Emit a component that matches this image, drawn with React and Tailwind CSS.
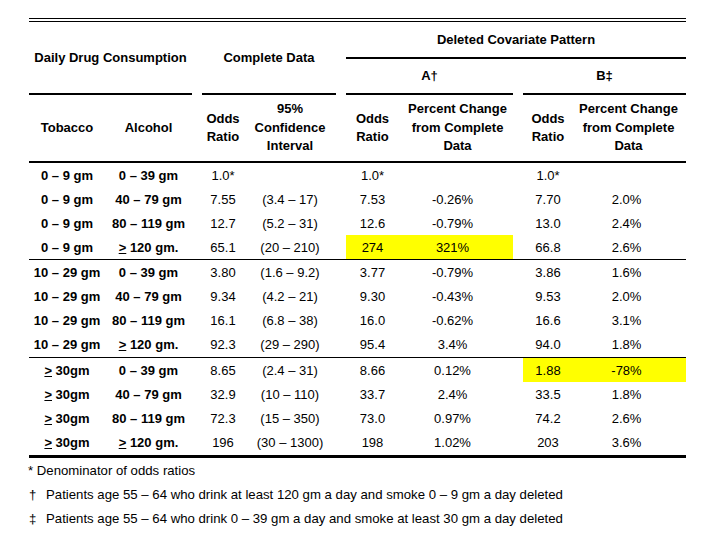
const groups = [
  {
    rows: [
      ["0 – 9 gm", "0 – 39 gm", "1.0*", "", "1.0*", "", "1.0*", ""],
      ["0 – 9 gm", "40 – 79 gm", "7.55", "(3.4 – 17)", "7.53", "-0.26%", "7.70", "2.0%"],
      ["0 – 9 gm", "80 – 119 gm", "12.7", "(5.2 – 31)", "12.6", "-0.79%", "13.0", "2.4%"],
      ["0 – 9 gm", "≥ 120 gm.", "65.1", "(20 – 210)", "274", "321%", "66.8", "2.6%", "A"],
    ],
    cls: "border-b border-black",
  },
  {
    rows: [
      ["10 – 29 gm", "0 – 39 gm", "3.80", "(1.6 – 9.2)", "3.77", "-0.79%", "3.86", "1.6%"],
      ["10 – 29 gm", "40 – 79 gm", "9.34", "(4.2 – 21)", "9.30", "-0.43%", "9.53", "2.0%"],
      ["10 – 29 gm", "80 – 119 gm", "16.1", "(6.8 – 38)", "16.0", "-0.62%", "16.6", "3.1%"],
      ["10 – 29 gm", "≥ 120 gm.", "92.3", "(29 – 290)", "95.4", "3.4%", "94.0", "1.8%"],
    ],
    cls: "border-b border-black pb-[1px]",
  },
  {
    rows: [
      ["≥ 30gm", "0 – 39 gm", "8.65", "(2.4 – 31)", "8.66", "0.12%", "1.88", "-78%", "B"],
      ["≥ 30gm", "40 – 79 gm", "32.9", "(10 – 110)", "33.7", "2.4%", "33.5", "1.8%"],
      ["≥ 30gm", "80 – 119 gm", "72.3", "(15 – 350)", "73.0", "0.97%", "74.2", "2.6%"],
      ["≥ 30gm", "≥ 120 gm.", "196", "(30 – 1300)", "198", "1.02%", "203", "3.6%"],
    ],
    cls: "border-b-[3px] border-black pb-[1px]",
  },
];

const cols = "grid grid-cols-[76px_87px_10px_48px_86px_10px_56px_111px_10px_52px_111px]";

function Val({ text }) {
  if (text.startsWith("≥")) {
    return (
      <span>
        <span className="underline">&gt;</span>
        {text.slice(1)}
      </span>
    );
  }
  return <span>{text}</span>;
}

function Row({ r }) {
  const hl = r[8];
  const cell = "flex items-center justify-center h-6 pt-[1px]";
  const yA = hl === "A" ? " bg-[#ffff00]" : "";
  const yB = hl === "B" ? " bg-[#ffff00]" : "";
  return (
    <div className={cols}>
      <div className={cell + " font-bold"}><Val text={r[0]} /></div>
      <div className={cell + " font-bold"}><Val text={r[1]} /></div>
      <div />
      <div className={cell + " pr-[6px]"}>{r[2]}</div>
      <div className={cell + " pr-[6px]"}>{r[3]}</div>
      <div />
      <div className={cell + " pr-[3px]" + yA}>{r[4]}</div>
      <div className={cell + " pr-[10px]" + yA}>{r[5]}</div>
      <div />
      <div className={cell + " pr-[2px]" + yB}>{r[6]}</div>
      <div className={cell + " pr-[8px]" + yB}>{r[7]}</div>
    </div>
  );
}

export default function App() {
  return (
    <div className="w-[720px] h-[540px] bg-white text-black text-[13px] overflow-hidden" style={{ fontFamily: '"Liberation Sans", Arial, sans-serif' }}>
      <div className="ml-[29px] w-[657px]">
        <div className="mt-[18px] h-[4px] border-y border-black" />

        <div className={cols + " grid-rows-[37px_36px_66px] font-bold"}>
          <div className="col-start-1 col-span-2 row-start-1 row-span-2 border-b-2 border-black flex items-center justify-center">
            Daily Drug Consumption
          </div>
          <div className="col-start-4 col-span-2 row-start-1 row-span-2 border-b-2 border-black flex items-center justify-center">
            Complete Data
          </div>
          <div className="col-start-7 col-span-5 row-start-1 border-b-2 border-black flex items-center justify-center">
            Deleted Covariate Pattern
          </div>
          <div className="col-start-7 col-span-2 row-start-2 border-b-2 border-black flex items-center justify-center">
            A†
          </div>
          <div className="col-start-10 col-span-2 row-start-2 border-b-2 border-black flex items-center justify-center">
            B‡
          </div>

          <div className="col-start-1 row-start-3 flex items-center justify-center">Tobacco</div>
          <div className="col-start-2 row-start-3 flex items-center justify-center">Alcohol</div>
          <div className="col-start-4 row-start-3 flex items-center justify-center text-center leading-[18px] pr-[6px]">
            Odds<br />Ratio
          </div>
          <div className="col-start-5 row-start-3 flex items-center justify-center text-center leading-[18.5px] pr-[6px]">
            95%<br />Confidence<br />Interval
          </div>
          <div className="col-start-7 row-start-3 flex items-center justify-center text-center leading-[18px] pr-[3px]">
            Odds<br />Ratio
          </div>
          <div className="col-start-8 row-start-3 flex items-center justify-center text-center leading-[18.5px]">
            Percent Change<br />from Complete<br />Data
          </div>
          <div className="col-start-10 row-start-3 flex items-center justify-center text-center leading-[18px] pr-[2px]">
            Odds<br />Ratio
          </div>
          <div className="col-start-11 row-start-3 flex items-center justify-center text-center leading-[18.5px] pr-[4px]">
            Percent Change<br />from Complete<br />Data
          </div>
        </div>
        <div className="h-[2px] bg-black" />

        {groups.map((g, i) => (
          <div key={i} className={g.cls}>
            {g.rows.map((r, j) => (
              <Row key={j} r={r} />
            ))}
          </div>
        ))}

        <div className="leading-6 -ml-[1px] text-[13.2px] pt-[1px]">
          <div>* Denominator of odds ratios</div>
          <div>
            <span className="inline-block w-[18px] pl-[1px]">†</span>Patients age 55 – 64 who drink at least 120 gm a day and smoke 0 – 9 gm a day deleted
          </div>
          <div>
            <span className="inline-block w-[18px] pl-[1px]">‡</span>Patients age 55 – 64 who drink 0 – 39 gm a day and smoke at least 30 gm a day deleted
          </div>
        </div>
      </div>
    </div>
  );
}
